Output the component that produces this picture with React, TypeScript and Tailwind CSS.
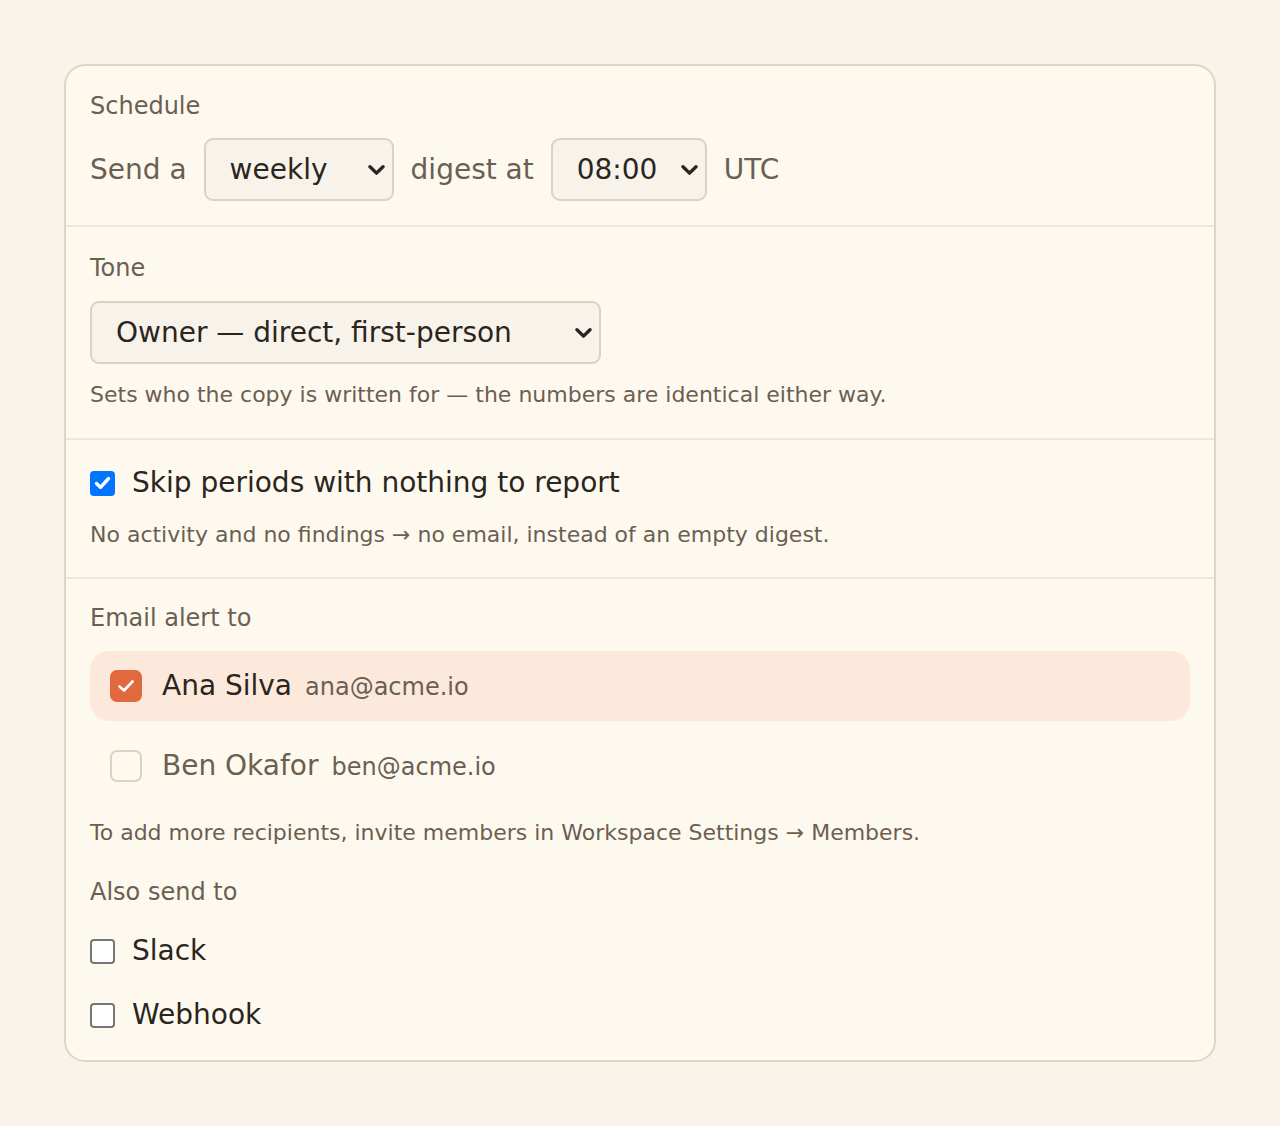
import { useState } from "react";

const FONT = { fontFamily: '"DejaVu Sans", Verdana, sans-serif' };

function Chevron() {
  return (
    <svg width="17" height="11" viewBox="0 0 17 11" className="pointer-events-none absolute right-[9px] top-1/2 -translate-y-1/2">
      <path d="M2 2.2 L8.5 8.6 L15 2.2" fill="none" stroke="#2a2520" strokeWidth="3.4" strokeLinecap="round" strokeLinejoin="round" />
    </svg>
  );
}

function Select({ value, options, width }: { value: string; options: string[]; width: string }) {
  const [v, setV] = useState(value);
  return (
    <div className={`relative ${width}`}>
      <select
        value={v}
        onChange={(e) => setV(e.target.value)}
        className="h-[63px] w-full appearance-none rounded-[9px] border-2 border-[#ddd2bf] bg-[#f8f3ea] pl-6 pr-10 text-[28px] text-[#2a2520] outline-none"
        style={FONT}
      >
        {options.map((o) => (
          <option key={o}>{o}</option>
        ))}
      </select>
      <Chevron />
    </div>
  );
}

function NativeBox({ checked }: { checked: boolean }) {
  return checked ? (
    <span className="flex h-[25px] w-[25px] shrink-0 items-center justify-center rounded-[4px] bg-[#0075ff]">
      <svg width="17" height="14" viewBox="0 0 17 14">
        <path d="M2.5 7.5 L6.5 11.3 L14.5 2.5" fill="none" stroke="white" strokeWidth="3.4" strokeLinecap="round" strokeLinejoin="round" />
      </svg>
    </span>
  ) : (
    <span className="h-[25px] w-[25px] shrink-0 rounded-[4px] border-2 border-[#767676] bg-white" />
  );
}

function Recipient({ name, email, checked }: { name: string; email: string; checked: boolean }) {
  return (
    <div className={`flex h-[70px] items-center gap-5 rounded-[19px] px-5 ${checked ? "bg-[#fce9dc]" : ""}`}>
      {checked ? (
        <span className="flex h-8 w-8 shrink-0 items-center justify-center rounded-[7px] bg-[#e2683e]">
          <svg width="18" height="14" viewBox="0 0 18 14">
            <path d="M2.5 7.5 L7 11.5 L15.5 2.5" fill="none" stroke="white" strokeWidth="2.6" strokeLinecap="round" strokeLinejoin="round" />
          </svg>
        </span>
      ) : (
        <span className="h-8 w-8 shrink-0 rounded-[7px] border-2 border-[#ddd2bf]" />
      )}
      <div className="flex items-baseline gap-[13px]">
        <span className={`text-[28px] ${checked ? "text-[#2a2520]" : "text-[#6b5f52]"}`}>{name}</span>
        <span className="text-[24px] text-[#6b5f52]">{email}</span>
      </div>
    </div>
  );
}

export default function App() {
  return (
    <div className="min-h-screen bg-[#f9f4ea] p-16" style={FONT}>
      <div className="overflow-hidden rounded-[21px] border-2 border-[#e0d5c3] bg-[#fef9ef]">
        {/* Schedule */}
        <section className="px-6 pb-6 pt-[25px]">
          <p className="mb-[17px] text-[24px] leading-[30px] text-[#6b5f52]">Schedule</p>
          <div className="flex items-center gap-[17px] text-[28px] text-[#6b5f52]">
            <span>Send a</span>
            <Select value="weekly" options={["daily", "weekly", "monthly"]} width="w-[190px]" />
            <span>digest at</span>
            <Select value="08:00" options={["06:00", "07:00", "08:00", "09:00"]} width="w-[156px]" />
            <span>UTC</span>
          </div>
        </section>

        {/* Tone */}
        <section className="border-t-2 border-[#efe6d7] px-6 pb-[27px] pt-[26px]">
          <p className="mb-[18px] text-[24px] leading-[30px] text-[#6b5f52]">Tone</p>
          <Select
            value="Owner — direct, first-person"
            options={["Owner — direct, first-person", "Team — neutral, third-person"]}
            width="w-[511px]"
          />
          <p className="mt-[15px] text-[22px] leading-[32px] text-[#6b5f52]">
            Sets who the copy is written for — the numbers are identical either way.
          </p>
        </section>

        {/* Skip */}
        <section className="border-t-2 border-[#efe6d7] px-6 pb-[26px] pt-6">
          <label className="flex h-[38px] items-center gap-[17px] text-[28px] text-[#2a2520]">
            <NativeBox checked />
            Skip periods with nothing to report
          </label>
          <p className="mt-[17px] text-[22px] leading-[32px] text-[#6b5f52]">
            No activity and no findings → no email, instead of an empty digest.
          </p>
        </section>

        {/* Recipients */}
        <section className="border-t-2 border-[#efe6d7] px-6 pb-[25px] pt-6">
          <p className="mb-[18px] text-[24px] leading-[30px] text-[#6b5f52]">Email alert to</p>
          <div className="flex flex-col gap-[10px]">
            <Recipient name="Ana Silva" email="ana@acme.io" checked />
            <Recipient name="Ben Okafor" email="ben@acme.io" checked={false} />
          </div>
          <p className="mt-4 text-[22px] leading-[32px] text-[#6b5f52]">
            To add more recipients, invite members in Workspace Settings → Members.
          </p>
          <p className="mt-7 text-[24px] leading-[30px] text-[#6b5f52]">Also send to</p>
          <div className="mt-6 flex flex-col gap-6">
            {["Slack", "Webhook"].map((c) => (
              <label key={c} className="flex h-10 items-center gap-[17px] text-[28px] text-[#2a2520]">
                <NativeBox checked={false} />
                {c}
              </label>
            ))}
          </div>
        </section>
      </div>
    </div>
  );
}
